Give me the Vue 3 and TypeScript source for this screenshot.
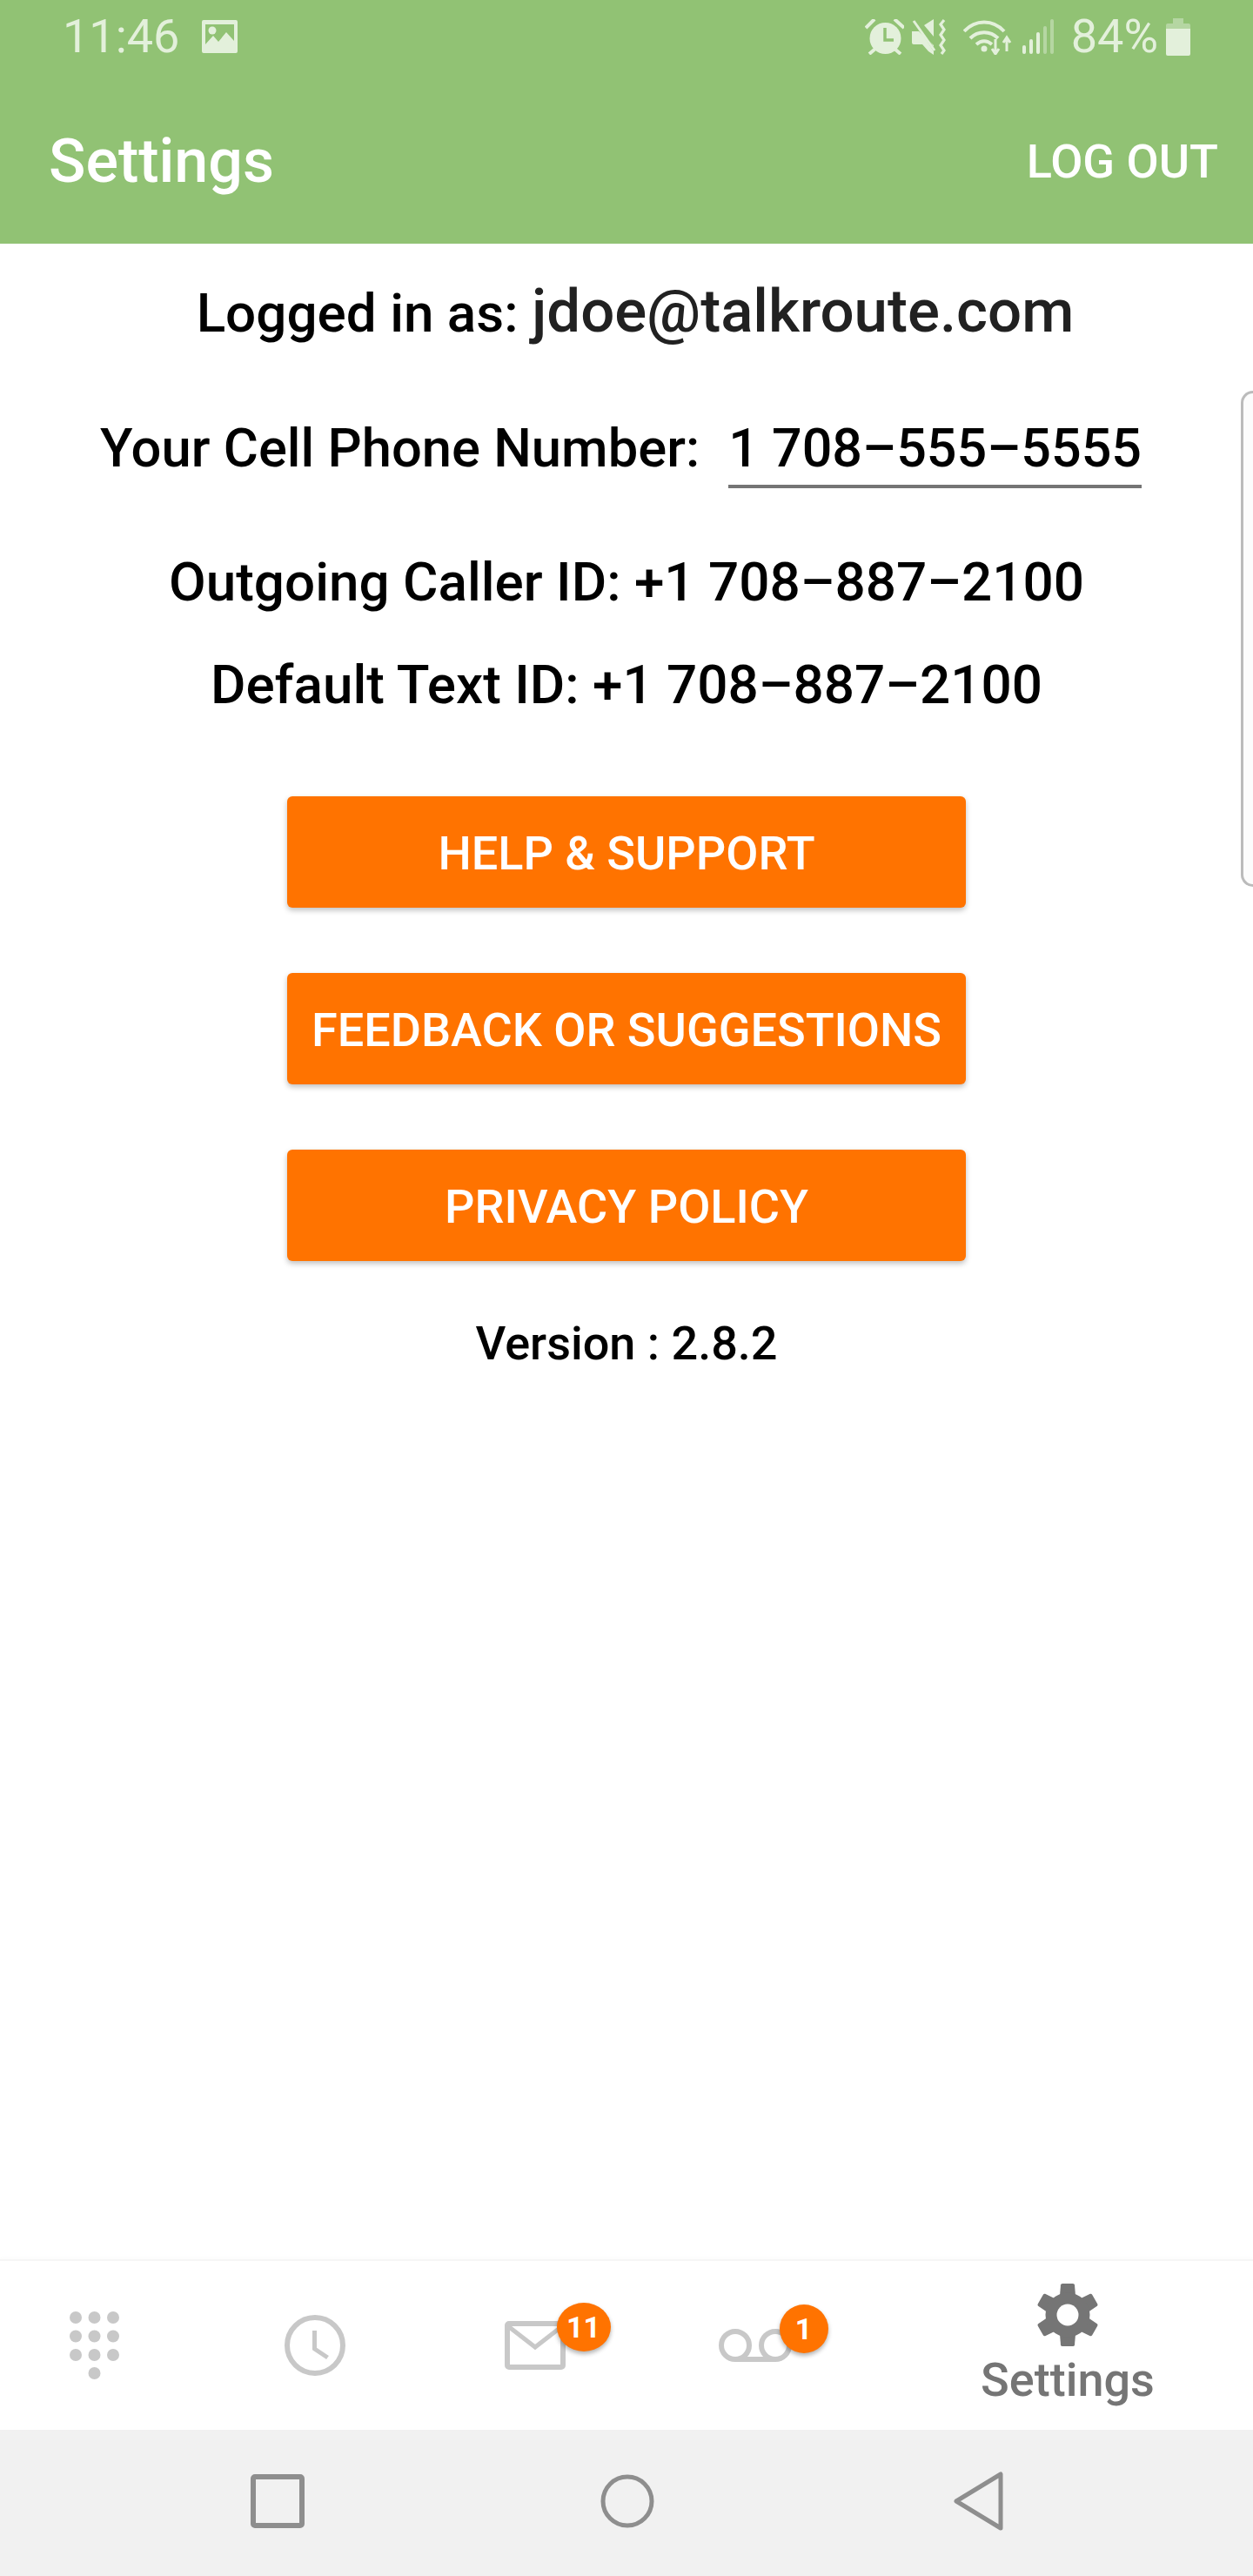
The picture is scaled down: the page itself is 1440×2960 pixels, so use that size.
<script setup lang="ts">
const buttons: string[] = ['HELP & SUPPORT', 'FEEDBACK OR SUGGESTIONS', 'PRIVACY POLICY']
const dots: number[][] = [
  [7, 7], [28.5, 7], [50, 7],
  [7, 28.5], [28.5, 28.5], [50, 28.5],
  [7, 50], [28.5, 50], [50, 50],
  [28.5, 71]
]
const teeth: number[] = [0, 60, 120, 180, 240, 300]
</script>

<template>
  <div class="phone">
    <header class="top">
      <div class="status">
        <div class="status-left">
          <span class="clock">11:46</span>
          <svg class="pic" width="41" height="38" viewBox="0 0 41 38">
            <path fill="currentColor" fill-rule="evenodd" d="M2 0h37a2 2 0 0 1 2 2v34a2 2 0 0 1-2 2H2a2 2 0 0 1-2-2V2a2 2 0 0 1 2-2zM4 5v23l9-10 6 7 9-11 9 10V5z" />
            <circle cx="12" cy="12" r="4.5" fill="currentColor" />
          </svg>
        </div>
        <div class="status-right">
          <svg width="45" height="41" viewBox="0 0 45 41">
            <circle cx="23.5" cy="22" r="18" fill="currentColor" />
            <path d="M1 10 11 0M45 10 34 0M5 40l7-6M41 40l-7-6" stroke="currentColor" stroke-width="4" fill="none" />
            <path d="M23 10v14h10" stroke="#91c274" stroke-width="3.5" fill="none" />
          </svg>
          <svg class="ic-mute" width="43" height="41" viewBox="0 0 43 41">
            <path fill="currentColor" d="M0 14h8L25 30v11L19 37 12 29H2a2 2 0 0 1-2-2zM14 7l11-7v20z" />
            <path d="M3 1 26 36" stroke="#91c274" stroke-width="3" />
            <path d="M2 2 26 36" stroke="currentColor" stroke-width="3" />
            <path d="M37 1l-4 5 4 6-4 6 4 6-4 6 4 6-3 4" stroke="currentColor" stroke-width="3.2" fill="none" />
          </svg>
          <svg class="ic-wifi" width="57" height="42" viewBox="0 0 57 42">
            <path d="M1 15C14 1 34 1 47 15M8 23c9-9 23-9 32 0M15 30c6-5 12-5 18 0" stroke="currentColor" stroke-width="4" fill="none" />
            <circle cx="24" cy="35" r="3.5" fill="currentColor" />
            <path d="M37 24v14M33 35l4 6 4-6M50 38V24M46 28l4-6 4 6" stroke="currentColor" stroke-width="3" fill="none" />
          </svg>
          <svg class="ic-signal" width="36" height="40" viewBox="0 0 36 40">
            <rect x="0" y="30" width="4" height="10" rx="2" fill="currentColor" />
            <rect x="8" y="23" width="4" height="17" rx="2" fill="currentColor" />
            <rect x="16" y="15" width="4" height="25" rx="2" fill="currentColor" />
            <rect x="24" y="8" width="4" height="32" rx="2" fill="currentColor" opacity=".45" />
            <rect x="32" y="0" width="4" height="40" rx="2" fill="currentColor" opacity=".45" />
          </svg>
          <span class="pct">84%</span>
          <svg class="ic-batt" width="28" height="43" viewBox="0 0 28 43">
            <path fill="currentColor" opacity=".45" d="M8 0h12v6h6a2 2 0 0 1 2 2v6H0V8a2 2 0 0 1 2-2h6z" />
            <path fill="currentColor" d="M0 12h28v29a2 2 0 0 1-2 2H2a2 2 0 0 1-2-2z" />
          </svg>
        </div>
      </div>
      <div class="toolbar">
        <span class="title">Settings</span>
        <span class="logout">LOG OUT</span>
      </div>
    </header>

    <main class="content">
      <div class="line logged">Logged in as: <span class="email">jdoe@talkroute.com</span></div>
      <div class="line cell">
        <span>Your Cell Phone Number:</span>
        <span class="field">1 708–555–5555</span>
      </div>
      <div class="line caller">Outgoing Caller ID: +1 708–887–2100</div>
      <div class="line textid">Default Text ID: +1 708–887–2100</div>
      <div class="btns">
        <button v-for="b in buttons" :key="b" class="btn" type="button">{{ b }}</button>
      </div>
      <div class="version">Version : 2.8.2</div>
      <div class="handle"></div>
    </main>

    <nav class="tabs">
      <div class="tab tab-first">
        <svg width="57" height="78" viewBox="0 0 57 78">
          <circle v-for="(d, i) in dots" :key="i" :cx="d[0]" :cy="d[1]" r="7" fill="#c8c8c8" />
        </svg>
      </div>
      <div class="tab">
        <svg width="70" height="70" viewBox="0 0 70 70">
          <circle cx="35" cy="35" r="32" fill="none" stroke="#c8c8c8" stroke-width="6" />
          <path d="M34.5 18v21l15 10" fill="none" stroke="#c8c8c8" stroke-width="5" />
        </svg>
      </div>
      <div class="tab">
        <div class="icon-wrap">
          <svg width="70" height="56" viewBox="0 0 70 56">
            <rect x="3" y="3" width="64" height="50" rx="2" fill="none" stroke="#c8c8c8" stroke-width="6" />
            <path d="M4 6l31 24L66 6" fill="none" stroke="#c8c8c8" stroke-width="5" />
          </svg>
          <span class="badge badge-wide">11</span>
        </div>
      </div>
      <div class="tab">
        <div class="icon-wrap">
          <svg width="84" height="38" viewBox="0 0 84 38">
            <circle cx="19" cy="19" r="16" fill="none" stroke="#c8c8c8" stroke-width="6" />
            <circle cx="65" cy="19" r="16" fill="none" stroke="#c8c8c8" stroke-width="6" />
            <path d="M19 35h46" stroke="#c8c8c8" stroke-width="6" />
          </svg>
          <span class="badge badge-one">1</span>
        </div>
      </div>
      <div class="tab tab-active">
        <svg width="72" height="72" viewBox="0 0 72 72">
          <path
            v-for="t in teeth"
            :key="t"
            d="M27 14 28 1.5Q28.2 0 30 0H42Q43.800 0 44 1.500L45 14Z"
            fill="#757575"
            :transform="`rotate(${t} 36 36)`"
          />
          <circle cx="36" cy="36" r="25.500" fill="#757575" />
          <circle cx="36" cy="36" r="12.500" fill="#fff" />
        </svg>
        <span class="tab-label">Settings</span>
      </div>
    </nav>

    <footer class="sysnav">
      <svg width="62" height="62" viewBox="0 0 62 62">
        <rect x="3" y="3" width="56" height="56" rx="2" fill="none" stroke="#8e8e8e" stroke-width="6" />
      </svg>
      <svg width="62" height="62" viewBox="0 0 62 62">
        <circle cx="31" cy="31" r="28" fill="none" stroke="#8e8e8e" stroke-width="5" />
      </svg>
      <svg width="58" height="68" viewBox="0 0 58 68">
        <path d="M54 3v62L3 34z" fill="none" stroke="#8e8e8e" stroke-width="5" stroke-linejoin="round" />
      </svg>
    </footer>
  </div>
</template>

<style>
body {
  margin: 0;
  background: #fff;
}
</style>

<style scoped>
.phone {
  width: 1440px;
  height: 2960px;
  display: flex;
  flex-direction: column;
  font-family: Roboto, "Liberation Sans", sans-serif;
  overflow: hidden;
}

.top {
  height: 280px;
  background: #91c274;
  flex-shrink: 0;
}

.status {
  height: 84px;
  display: flex;
  justify-content: space-between;
  align-items: center;
  padding: 0 72px;
  color: #e3f0db;
}

.status-left,
.status-right {
  display: flex;
  align-items: center;
}

.status-left {
  gap: 26px;
}

.status-right {
  gap: 9px;
}

.ic-wifi {
  margin-left: 7px;
}

.ic-signal {
  margin-left: 2px;
}

.clock,
.pct {
  font-size: 54px;
  line-height: 60px;
}

.pct {
  margin-left: 11px;
}

.ic-batt {
  margin-left: 0;
}

.toolbar {
  height: 196px;
  box-sizing: border-box;
  display: flex;
  align-items: center;
  justify-content: space-between;
  padding: 6px 40px 0 56px;
  color: #fff;
}

.title {
  font-size: 70px;
  font-weight: 500;
}

.logout {
  font-size: 54px;
  font-weight: 500;
}

.content {
  flex: 1;
  position: relative;
  display: flex;
  flex-direction: column;
  align-items: center;
  color: #000;
  font-size: 62px;
  font-weight: 500;
}

.line {
  white-space: nowrap;
  line-height: 80px;
}

.logged {
  margin-top: 38px;
  margin-left: 20px;
}

.email {
  font-size: 69px;
  color: #212121;
}

.cell {
  display: flex;
  gap: 33px;
  margin-top: 75px;
  margin-right: 13px;
  font-size: 61.5px;
}

.field {
  font-size: 61px;
  padding-bottom: 2px;
  border-bottom: 4px solid #757575;
}

.caller {
  margin-top: 68px;
}

.textid {
  margin-top: 38px;
}

.btns {
  display: flex;
  flex-direction: column;
  gap: 75px;
  margin-top: 88px;
}

.btn {
  width: 780px;
  height: 128px;
  border: 0;
  border-radius: 6px;
  background: #ff7300;
  color: #fff;
  font-family: inherit;
  font-size: 54px;
  font-weight: 500;
  padding: 2px 0 0;
  box-shadow: 0 3px 6px rgba(0, 0, 0, 0.25);
}

.version {
  margin-top: 63px;
  font-size: 54px;
  line-height: 64px;
}

.handle {
  position: absolute;
  top: 169px;
  right: 0;
  width: 14px;
  height: 570px;
  box-sizing: border-box;
  background: #fcfcfc;
  border: 3px solid #bbb;
  border-right: 0;
  border-radius: 20px 0 0 20px;
}

.tabs {
  height: 196px;
  flex-shrink: 0;
  box-sizing: border-box;
  border-top: 2px solid #f6f6f6;
  box-shadow: 0 -2px 4px rgba(0, 0, 0, 0.02);
  display: grid;
  grid-template-columns: 235px 253px 253px 253px 1fr;
  background: #fff;
}

.tab {
  display: flex;
  flex-direction: column;
  align-items: center;
  justify-content: center;
}

.tab-first {
  padding-right: 19px;
}

.tab-active {
  padding-left: 20px;
}

.icon-wrap {
  position: relative;
  display: flex;
}

.badge {
  position: absolute;
  height: 56px;
  border-radius: 50%;
  background: #ff7300;
  color: #fff;
  font-size: 34px;
  font-weight: 700;
  line-height: 56px;
  text-align: center;
  box-shadow: 0 3px 5px rgba(0, 0, 0, 0.3);
}

.badge-wide {
  left: 60px;
  top: -21px;
  width: 62px;
}

.badge-one {
  left: 70px;
  top: -28px;
  width: 56px;
}

.tab-label {
  margin-top: 7px;
  font-size: 54px;
  font-weight: 500;
  color: #757575;
  line-height: 64px;
}

.sysnav {
  height: 168px;
  flex-shrink: 0;
  box-sizing: border-box;
  padding-bottom: 4px;
  background: #f1f1f1;
  display: grid;
  grid-template-columns: 288px 62px 340px 62px 344px 58px 1fr;
  align-items: center;
}

.sysnav svg:nth-child(1) {
  grid-column: 2;
}

.sysnav svg:nth-child(2) {
  grid-column: 4;
}

.sysnav svg:nth-child(3) {
  grid-column: 6;
}
</style>
